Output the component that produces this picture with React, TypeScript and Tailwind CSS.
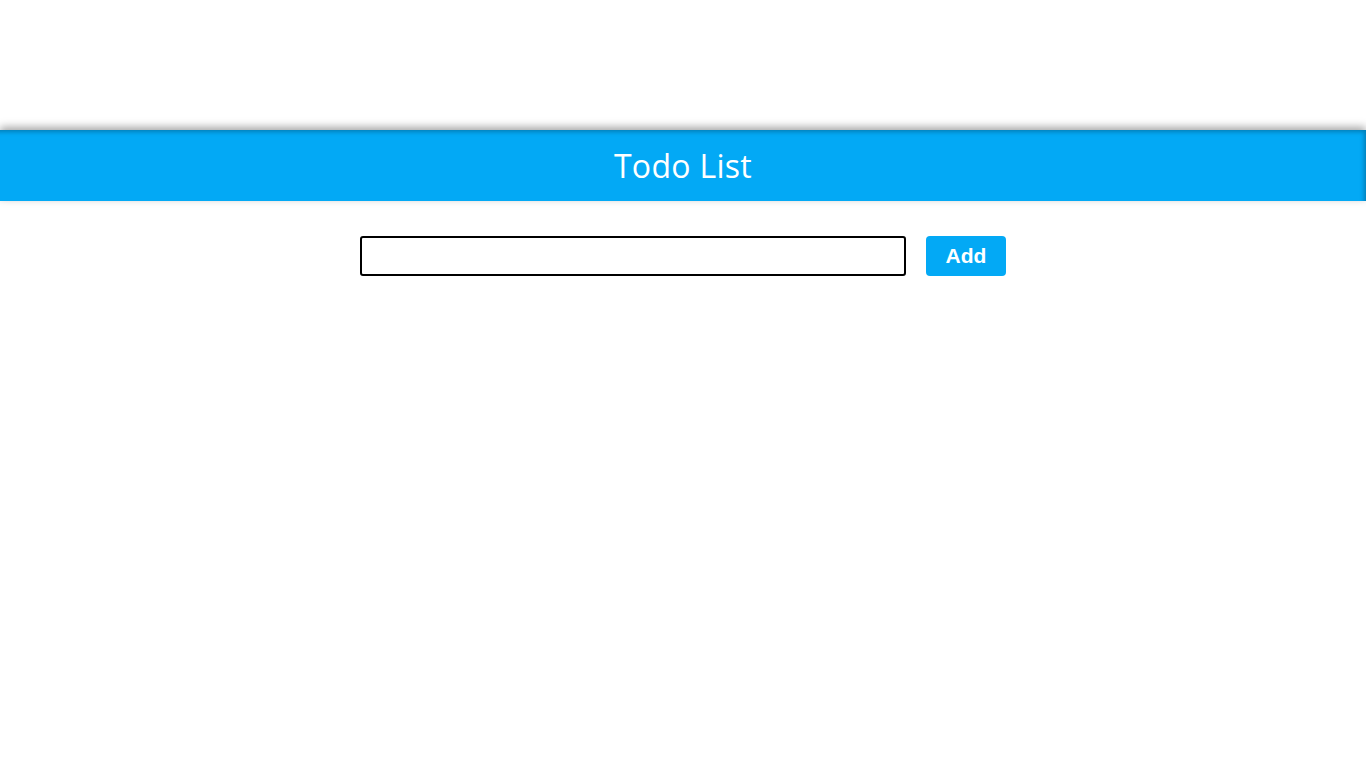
import React, { useEffect, useRef } from "react";

export default function App() {
  const ref = useRef<HTMLInputElement>(null);
  useEffect(() => {
    ref.current?.focus();
  }, []);
  return (
    <div className="min-h-screen bg-white pt-[130px]" style={{ fontFamily: '"Liberation Sans", Arial, sans-serif' }}>
      <header className="h-[71px] bg-[#03a9f5] flex items-center justify-center shadow-[0_-3px_8px_rgba(0,0,0,0.35),inset_-4px_4px_4px_-2px_rgba(0,0,0,0.25)]">
        <h1 className="text-[32px] text-white font-normal leading-none tracking-[0.3px]" style={{ fontFamily: '"Open Sans", "Noto Sans", sans-serif' }}>
          Todo List
        </h1>
      </header>
      <div className="flex justify-center items-center gap-5 mt-[35px]">
        <input
          ref={ref}
          autoFocus
          type="text"
          className="w-[546px] h-10 border-2 border-black rounded-[3px] px-[10px] text-[24px] outline-none bg-white caret-black"
        />
        <button className="w-20 h-10 bg-[#03a9f5] text-white font-bold text-[21px] rounded-[4px]">
          Add
        </button>
      </div>
    </div>
  );
}
